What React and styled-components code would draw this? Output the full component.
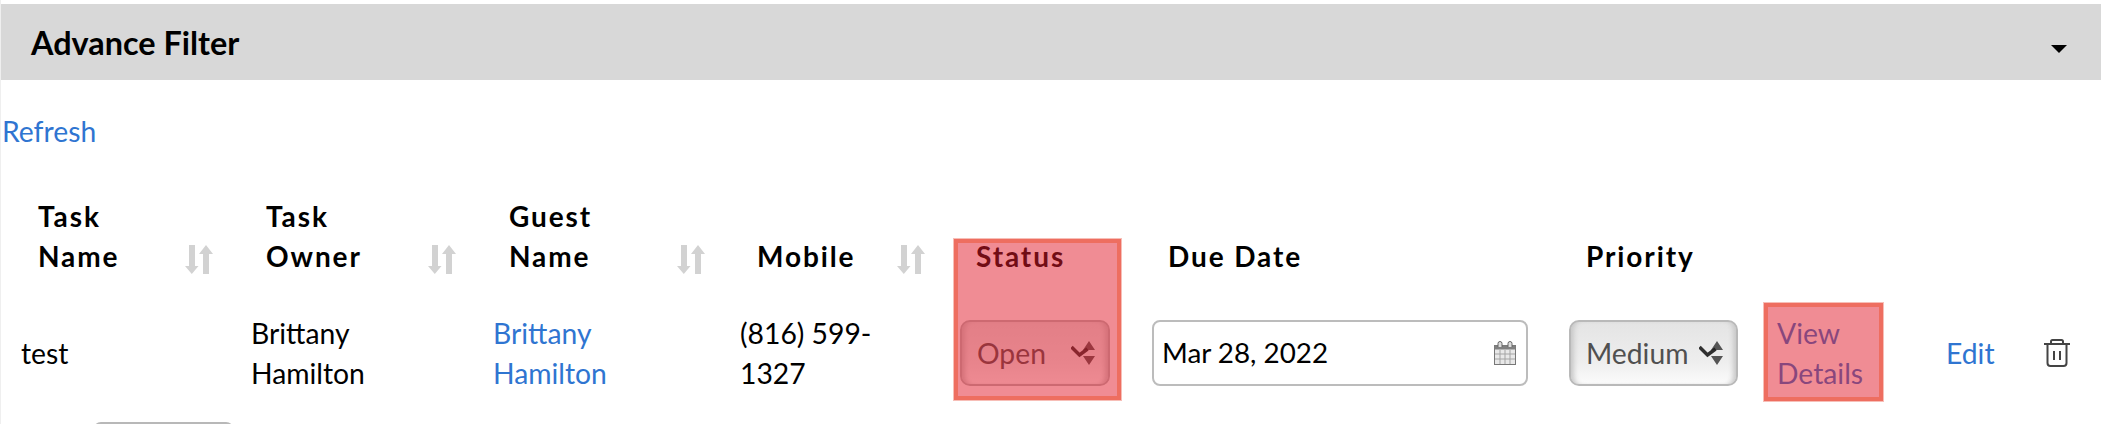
import styled, { createGlobalStyle } from "styled-components";

const GlobalStyle = createGlobalStyle`
  html, body {
    margin: 0;
    height: 424px;
    overflow: hidden;
    background: #fff;
  }
  body {
    font-family: Lato, "Open Sans", sans-serif;
    color: #000;
  }
`;

const Page = styled.div`
  height: 424px;
  overflow: hidden;
  padding-top: 4px;
  box-sizing: border-box;
  border-left: 1px solid #efefef;
`;

const FilterBar = styled.div`
  height: 76px;
  background: #d8d8d8;
  display: flex;
  align-items: center;
  justify-content: space-between;
  padding: 0 34px 0 30px;
  box-sizing: border-box;
`;

const FilterTitle = styled.h2`
  margin: 0;
  font-size: 32.4px;
  font-weight: 700;
`;

const Caret = styled.span`
  width: 0;
  height: 0;
  border-left: 8px solid transparent;
  border-right: 8px solid transparent;
  border-top: 8px solid #000;
  margin-top: 13px;
`;

const Toolbar = styled.div`
  height: 40px;
  margin-top: 31px;
  padding-left: 1px;
  line-height: 40px;
`;

const Link = styled.a`
  color: #2f75d1;
  font-size: 28.3px;
  text-decoration: none;
`;

const Table = styled.div`
  display: grid;
  grid-template-columns: 230px 242px 247px 221px 191px 417px 208px 169px 97px 1fr;
  grid-template-rows: 101px 111px;
  margin-top: 45px;
  padding-left: 5px;
`;

const Head = styled.div`
  grid-row: 1;
  grid-column: ${(p) => p.$col};
  display: flex;
  align-items: flex-end;
  justify-content: space-between;
  padding: 0 ${(p) => p.$right || 0}px 21px ${(p) => p.$left || 30}px;
  font-size: 28px;
  font-weight: 700;
  line-height: 40px;
  letter-spacing: 1.9px;
`;

const Cell = styled.div`
  grid-row: 2;
  grid-column: ${(p) => p.$col};
  display: flex;
  align-items: center;
  padding-left: ${(p) => p.$left ?? 15}px;
  font-size: 28.3px;
  line-height: 40px;
`;

const SortIcon = styled.svg`
  width: 28px;
  height: 29px;
  margin-bottom: 2px;
  flex: none;
`;

const SelectBox = styled.div`
  width: ${(p) => p.$width}px;
  height: 66px;
  box-sizing: border-box;
  display: flex;
  align-items: center;
  justify-content: space-between;
  padding: 0 12px 0 15px;
  border: 2px solid #b9b9b9;
  border-radius: 10px;
  color: #505050;
  background: linear-gradient(#e4e4e4, #eeeeee 65%, #fbfbfb);
  box-shadow: inset 6px 0 5px -3px #c8c8c8, inset -6px 0 5px -3px #c8c8c8;
  flex: none;
`;

const DateBox = styled.div`
  width: 376px;
  height: 66px;
  box-sizing: border-box;
  display: flex;
  align-items: center;
  justify-content: space-between;
  padding: 0 10px 0 8px;
  border: 2px solid #bcbcbc;
  border-radius: 8px;
  background: #fff;
  font-size: 27.8px;
  flex: none;
`;

const ArrowIcon = styled.svg`
  width: 25px;
  height: 26px;
  flex: none;
`;

const Highlight = styled.div`
  pointer-events: none;
  box-sizing: border-box;
  background: rgba(225, 25, 41, 0.5);
  border: 4px solid #ee6e60;
  outline: 1px solid rgba(238, 110, 96, 0.45);
`;

const StatusHighlight = styled(Highlight)`
  grid-column: 5;
  grid-row: 1 / span 2;
  margin: 43px 16px 8px 8px;
`;

const DetailsHighlight = styled(Highlight)`
  grid-column: 8;
  grid-row: 2;
  justify-self: start;
  width: 119px;
  margin: 6px 0 7px 2px;
`;

const PageSize = styled.div`
  width: 141px;
  height: 30px;
  margin: 14px 0 0 92px;
  border: 2px solid #b8b8b8;
  border-radius: 8px;
  box-sizing: border-box;
`;

const SortArrows = () => (
  <SortIcon viewBox="0 0 28 29">
    <path d="M4 0h6v21h3.500L6.800 29 0 21h4z" fill="#d2d2d2" />
    <path d="M18 29V9h-4l7-9 7 9h-4v20z" fill="#d2d2d2" />
  </SortIcon>
);

const SelectArrows = () => (
  <ArrowIcon viewBox="0 0 25 26">
    <path d="M12 10 18 1l6 9zM12 16h12l-6 9z" fill="#555" />
    <path d="M0.500 7l8 8 8-6" fill="none" stroke="#1c1c1c" strokeOpacity="0.9" strokeWidth="3.500" />
  </ArrowIcon>
);

const CalendarIcon = () => (
  <svg width="22" height="24" viewBox="0 0 22 24">
    <rect x="0.500" y="4.500" width="21" height="19" fill="#e8e8e8" stroke="#777" />
    <rect x="0.500" y="4.500" width="21" height="4" fill="#808080" />
    <path d="M6 9v14M11 9v14M16 9v14M1 13h20M1 18h20" stroke="#a4a4a4" />
    <path d="M4 6V2.500a2 2 0 0 1 4 0V6M14 6V2.500a2 2 0 0 1 4 0V6" fill="#ddd" stroke="#666" />
  </svg>
);

const TrashIcon = () => (
  <svg width="28" height="28" viewBox="0 0 28 28" fill="none" stroke="#444" strokeWidth="2">
    <path d="M1 5h26M8 5V2.500A1.500 1.500 0 0 1 9.500 1h9A1.500 1.500 0 0 1 20 2.500V5" />
    <path d="M4.500 5v19a3 3 0 0 0 3 3h13a3 3 0 0 0 3-3V5M11 12v9M17 12v9" />
  </svg>
);

export default function App() {
  return (
    <>
      <GlobalStyle />
      <Page>
        <FilterBar>
          <FilterTitle>Advance Filter</FilterTitle>
          <Caret />
        </FilterBar>
        <Toolbar>
          <Link href="#">Refresh</Link>
        </Toolbar>
        <Table>
          <Head $col={1} $left={32} $right={23}>
            <span>Task<br />Name</span>
            <SortArrows />
          </Head>
          <Head $col={2} $left={30} $right={22}>
            <span>Task<br />Owner</span>
            <SortArrows />
          </Head>
          <Head $col={3} $left={31} $right={20}>
            <span>Guest<br />Name</span>
            <SortArrows />
          </Head>
          <Head $col={4} $left={32} $right={21}>
            <span>Mobile</span>
            <SortArrows />
          </Head>
          <Head $col={5}>Status</Head>
          <Head $col={6} $left={31}>Due Date</Head>
          <Head $col={7} $left={32}>Priority</Head>

          <Cell $col={1}>test</Cell>
          <Cell $col={2}><span>Brittany<br />Hamilton</span></Cell>
          <Cell $col={3}><Link href="#">Brittany<br />Hamilton</Link></Cell>
          <Cell $col={4}><span>(816) 599-<br />1327</span></Cell>
          <Cell $col={5} $left={14}>
            <SelectBox $width={150}>
              Open
              <SelectArrows />
            </SelectBox>
          </Cell>
          <Cell $col={6}>
            <DateBox>
              Mar 28, 2022
              <CalendarIcon />
            </DateBox>
          </Cell>
          <Cell $col={7}>
            <SelectBox $width={169}>
              Medium
              <SelectArrows />
            </SelectBox>
          </Cell>
          <Cell $col={8}><Link href="#">View<br />Details</Link></Cell>
          <Cell $col={9}><Link href="#">Edit</Link></Cell>
          <Cell $col={10}><TrashIcon /></Cell>

          <StatusHighlight />
          <DetailsHighlight />
        </Table>
        <PageSize />
      </Page>
    </>
  );
}
